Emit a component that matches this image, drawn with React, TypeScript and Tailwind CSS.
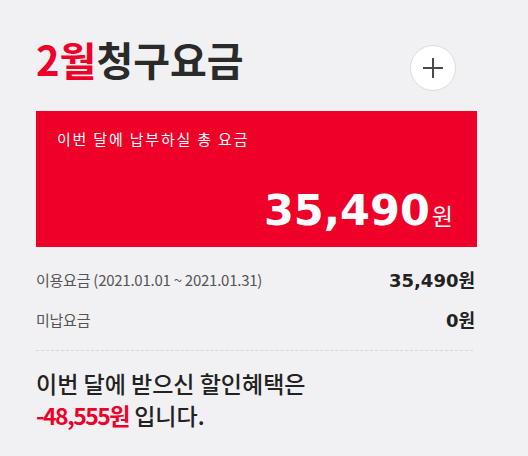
const kr = { fontFamily: '"Noto Sans CJK KR", "Noto Sans", sans-serif' };
const num = { fontFamily: '"DejaVu Sans", "Noto Sans CJK KR", sans-serif' };

function PlusButton() {
  return (
    <button className="w-[46px] h-[46px] rounded-full bg-white border border-[#dcdcdc] flex items-center justify-center">
      <svg width="22" height="22" viewBox="0 0 22 22" fill="none">
        <path d="M11 1v20M1 11h20" stroke="#4a4a4a" strokeWidth="2" />
      </svg>
    </button>
  );
}

function Row({ label, value }: { label: string; value: string }) {
  return (
    <div className="flex items-center justify-between h-[40px]">
      <span className="text-[15px] text-[#555] tracking-[-0.25px]" style={kr}>
        {label}
      </span>
      <span className="text-[18px] font-bold text-[#222]" style={num}>
        {value.replace('원', '')}
        <span style={kr}>원</span>
      </span>
    </div>
  );
}

export default function App() {
  return (
    <div className="w-[528px] h-[456px] bg-[#f1f1f4] overflow-hidden" style={kr}>
      <div className="ml-[36px] w-[441px]">
        <div className="flex items-start justify-between h-[111px] pt-[37px] pr-[21px]">
          <h1 className="text-[40px] font-bold leading-[44px] text-[#2a2a2a]">
            <span className="text-[#ee0028]">2월</span>청구요금
          </h1>
          <div className="mt-[8px]">
            <PlusButton />
          </div>
        </div>

        <div className="h-[136px] bg-[#ee0028] pl-[21px] pr-[24px] pt-[18px] flex flex-col">
          <p className="text-[15px] leading-[20px] tracking-[1.8px] text-white">이번 달에 납부하실 총 요금</p>
          <div className="mt-auto mb-[15px] flex items-baseline justify-end text-white">
            <span className="text-[43px] font-bold leading-none" style={num}>
              35,490
            </span>
            <span className="text-[23px] ml-[2px] leading-none">원</span>
          </div>
        </div>

        <div className="mt-[13px] pr-[2px]">
          <Row label="이용요금 (2021.01.01 ~ 2021.01.31)" value="35,490원" />
          <Row label="미납요금" value="0원" />
        </div>

        <div className="mt-[10px] mr-[4px] border-t border-dashed border-[#d6d6da]" />

        <div className="mt-[16px] text-[23px] leading-[32px] text-[#222] font-medium">
          <p>이번 달에 받으신 할인혜택은</p>
          <p>
            <span className="text-[#ee0028] font-bold tracking-[-1.5px]">-48,555원</span> 입니다.
          </p>
        </div>
      </div>
    </div>
  );
}
